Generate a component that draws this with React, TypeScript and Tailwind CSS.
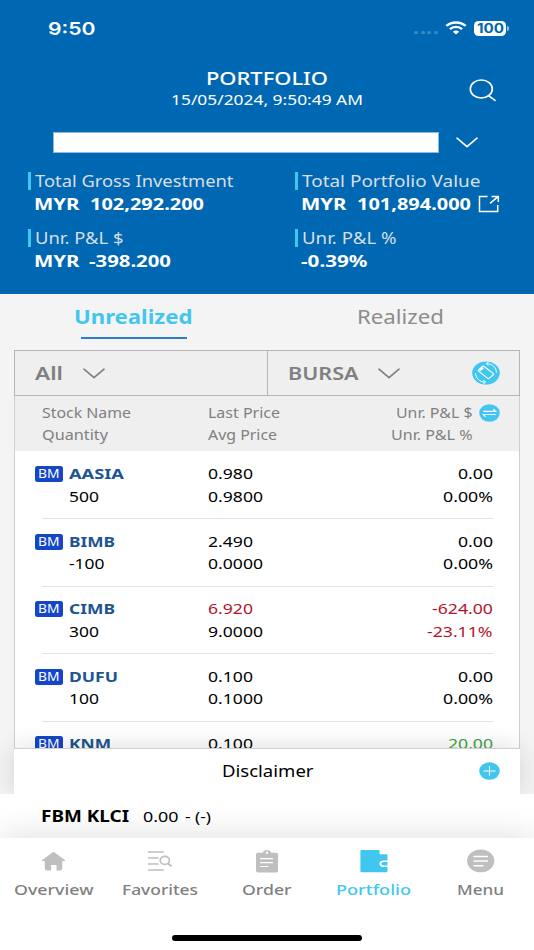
import { useLayoutEffect, useRef, useState, type ReactNode } from "react";
import clsx from "clsx";

type Holding = {
  name: string;
  nameW: number;
  qty?: string;
  qtyW?: number;
  last: string;
  avg?: string;
  pl: string;
  plW: number;
  pct?: string;
  pctW?: number;
  lastTone?: string;
  plTone?: string;
};

const holdings: Holding[] = [
  { name: "AASIA", nameW: 55, qty: "500", qtyW: 30, last: "0.980", avg: "0.9800", pl: "0.00", plW: 35, pct: "0.00%", pctW: 50 },
  { name: "BIMB", nameW: 46, qty: "-100", qtyW: 35.5, last: "2.490", avg: "0.0000", pl: "0.00", plW: 35, pct: "0.00%", pctW: 50 },
  {
    name: "CIMB",
    nameW: 46,
    qty: "300",
    qtyW: 30,
    last: "6.920",
    avg: "9.0000",
    pl: "-624.00",
    plW: 61,
    pct: "-23.11%",
    pctW: 65.5,
    lastTone: "text-[#b3142b]",
    plTone: "text-[#b3142b]",
  },
  { name: "DUFU", nameW: 49, qty: "100", qtyW: 30, last: "0.100", avg: "0.1000", pl: "0.00", plW: 35, pct: "0.00%", pctW: 50 },
  { name: "KNM", nameW: 42, last: "0.100", pl: "20.00", plW: 45, plTone: "text-[#43a047]" },
];

/** One line of text, stretched horizontally to the given width. */
function Wide({ w, className, children }: { w: number; className?: string; children: string }) {
  const ref = useRef<HTMLSpanElement>(null);
  const [scale, setScale] = useState(1);

  useLayoutEffect(() => {
    if (!ref.current) return;
    const natural = parseFloat(getComputedStyle(ref.current).width);
    if (natural > 0) setScale(w / natural);
  }, [w, children]);

  return (
    <span className={clsx("block shrink-0", className)} style={{ width: w }}>
      <span ref={ref} className="inline-block origin-left align-top whitespace-pre" style={{ transform: `scaleX(${scale})` }}>
        {children}
      </span>
    </span>
  );
}

function Chevron({ className }: { className?: string }) {
  return (
    <svg viewBox="0 0 22 11" fill="none" stroke="currentColor" strokeWidth="1.7" className={clsx("h-[11px] w-[22px] shrink-0", className)}>
      <path strokeLinecap="round" strokeLinejoin="round" d="M1 1.2L11 9.6L21 1.2" />
    </svg>
  );
}

function StatusBar() {
  return (
    <div className="flex h-[57px] items-center pl-[48px]">
      <Wide w={47.5} className="font-['Inter'] text-[17.5px] leading-[57px] font-semibold">9:50</Wide>
      <div className="mt-[8px] ml-[318.5px] flex gap-[2.7px]">
        {[0, 1, 2, 3].map((i) => (
          <span key={i} className="h-[3px] w-[4px] rounded-full bg-[#3a89c5]" />
        ))}
      </div>
      <svg viewBox="0 0 22 14" className="mt-[-1px] ml-[7px] h-[14px] w-[22px]" fill="none" stroke="currentColor">
        <path d="M1.3 4.9C6.6 0.2 15.4 0.2 20.7 4.9" strokeWidth="2.5" />
        <path d="M4.9 8.1C8.3 5.1 13.7 5.1 17.1 8.1" strokeWidth="2.4" />
        <path d="M11 13.6L7.8 10.7C9.6 9.2 12.4 9.2 14.2 10.7Z" fill="currentColor" stroke="none" />
      </svg>
      <div className="ml-[7px] flex h-[15px] w-[32px] justify-center rounded-[4.5px] bg-white text-[#0067b3]">
        <Wide w={27} className="font-['Inter'] text-[12.5px] leading-[15px] font-bold">100</Wide>
      </div>
      <span className="ml-[1px] h-[5px] w-[2px] rounded-r-full bg-[#9cc5e3]" />
    </div>
  );
}

function Stat({ label, w, children }: { label: string; w: number; children: ReactNode }) {
  return (
    <div className="h-[56.3px]">
      <div className="flex h-[18px] items-center">
        <span className="h-[18px] w-[3px] bg-[#41c7ef]" />
        <Wide w={w} className="ml-[4px] text-[16px] leading-[20px] text-[#d8dfe6]">{label}</Wide>
      </div>
      <div className="mt-[3px] ml-[6px] flex h-[22px] items-center text-[16.5px] leading-[22px] font-bold">{children}</div>
    </div>
  );
}

function Header() {
  return (
    <header className="h-[294px] bg-[#0067b3] text-white">
      <StatusBar />
      <div className="grid h-[53px] grid-cols-[1fr_auto_1fr] pt-[10px]">
        <div />
        <div className="flex flex-col items-center">
          <Wide w={122} className="text-[18px] leading-[22px] font-medium">PORTFOLIO</Wide>
          <Wide w={192} className="text-[15px] leading-[21px]">15/05/2024, 9:50:49 AM</Wide>
        </div>
        <svg
          viewBox="0 0 28 23"
          fill="none"
          stroke="currentColor"
          strokeWidth="1.7"
          className="mt-[12px] mr-[37px] h-[23px] w-[28px] justify-self-end"
        >
          <ellipse cx="12.3" cy="10" rx="11" ry="9" />
          <path strokeLinecap="round" d="M19.5 16.6L26 21.4" />
        </svg>
      </div>
      <div className="mt-[22px] ml-[53px] flex h-[21px] items-center">
        <div className="h-[21px] w-[386px] border border-[#8fb8e0] bg-white" />
        <Chevron className="mt-[-1px] ml-[16.5px]" />
      </div>
      <div className="mt-[19.3px] grid grid-cols-[267px_1fr] pl-[27.6px]">
        <Stat label="Total Gross Investment" w={198.5}>
          <Wide w={45.5}>MYR</Wide>
          <Wide w={114} className="ml-[10.5px]">102,292.200</Wide>
        </Stat>
        <Stat label="Total Portfolio Value" w={178.5}>
          <Wide w={45.5}>MYR</Wide>
          <Wide w={114} className="ml-[10.5px]">101,894.000</Wide>
          <svg viewBox="0 0 22 18" fill="none" stroke="currentColor" strokeWidth="1.5" className="ml-[7px] h-[18px] w-[22px]">
            <path d="M9.5 1.4H1.5V16.6H19.7V10" />
            <path d="M13.5 1.4H20.3V7M20 1.6L12 8.4" />
          </svg>
        </Stat>
        <Stat label="Unr. P&L $" w={88.5}>
          <Wide w={45.5}>MYR</Wide>
          <Wide w={82} className="ml-[9.5px]">-398.200</Wide>
        </Stat>
        <Stat label="Unr. P&L %" w={94.5}>
          <Wide w={66.5}>-0.39%</Wide>
        </Stat>
      </div>
    </header>
  );
}

function Filters() {
  return (
    <div className="grid h-[46px] grid-cols-[253px_1fr] border border-[#b5b5b5] bg-[#efefef] text-[17.5px] leading-[45px] font-semibold text-[#808080]">
      <div className="flex items-center border-r border-[#b5b5b5] pl-[20px]">
        <Wide w={28}>All</Wide>
        <Chevron className="ml-[19.5px]" />
      </div>
      <div className="flex items-center pl-[19.5px]">
        <Wide w={70.5}>BURSA</Wide>
        <Chevron className="ml-[19.5px]" />
        <svg viewBox="0 0 28 24" className="mt-[-2px] ml-[72px] h-[24px] w-[28px]" fill="none" stroke="#fff">
          <ellipse cx="14" cy="12" rx="13.8" ry="11.5" fill="#41c7ef" stroke="none" />
          <path d="M11.8 5.2L21.3 12.6Q22 13.2 21.2 13.8L17.2 17.4Q16.4 18 15.7 17.4L6.6 10.2Q6 9.6 6.7 9L10.6 5.2Q11.2 4.8 11.8 5.2Z" strokeWidth="1.1" />
          <path d="M8 9.6L11.2 6.8" strokeWidth="1.8" />
          <path d="M15 2.6C20.5 3 24.4 6.8 24.4 11.6M13 21.3C7.6 20.9 3.6 17 3.6 12.2" strokeWidth="1" />
          <path d="M16.5 1L14.3 2.7L16.2 4.6M11.6 19.2L13.6 21.2L11.4 22.8" strokeWidth="1" />
        </svg>
      </div>
    </div>
  );
}

function TableHead() {
  return (
    <div className="grid h-[55px] grid-cols-[166.3px_1fr_auto] border-x border-[#cfcfcf] bg-[#efefef] pt-[1.5px] pr-[19.5px] pl-[26.5px] text-[14px] leading-[22.5px] text-[#808080]">
      <div className="pt-[4px]">
        <Wide w={89}>Stock Name</Wide>
        <Wide w={66}>Quantity</Wide>
      </div>
      <div className="pt-[4px]">
        <Wide w={72}>Last Price</Wide>
        <Wide w={69}>Avg Price</Wide>
      </div>
      <div className="flex gap-[6.5px] pt-[4px]">
        <div className="flex flex-col items-end">
          <Wide w={76.5}>Unr. P&L $</Wide>
          <Wide w={81.5}>Unr. P&L %</Wide>
        </div>
        <svg viewBox="0 0 21 18" className="mt-[2px] h-[18px] w-[21px]" fill="none" stroke="#fff" strokeWidth="1.2">
          <ellipse cx="10.5" cy="9" rx="10.3" ry="8.7" fill="#41c7ef" stroke="none" />
          <path d="M4.2 7.4H16.6L14.4 5.2M16.8 10.5H4.4L6.6 12.7" />
        </svg>
      </div>
    </div>
  );
}

function Row({ h }: { h: Holding }) {
  return (
    <div className="h-[67.5px] shrink-0 pr-[26.5px] pl-[20px]">
      <div className="flex h-[67px] text-[14.8px] leading-[22.5px] text-black">
        <div className="w-[172.5px] pt-[11.2px]">
          <div className="flex items-center">
            <span className="mt-[1.4px] flex h-[16px] w-[27.5px] justify-center rounded-[2.5px] bg-[#1446c8] text-white">
              <Wide w={21.5} className="text-[12.5px] leading-[16.5px]">BM</Wide>
            </span>
            <Wide w={h.nameW} className="ml-[6.5px] font-bold text-[#1d5590]">{h.name}</Wide>
          </div>
          {h.qty && <Wide w={h.qtyW ?? 30} className="ml-[33.5px]">{h.qty}</Wide>}
        </div>
        <div className="flex-1 pt-[11.2px]">
          <Wide w={45} className={h.lastTone}>{h.last}</Wide>
          {h.avg && <Wide w={55}>{h.avg}</Wide>}
        </div>
        <div className={clsx("flex flex-col items-end pt-[11.2px]", h.plTone)}>
          <Wide w={h.plW}>{h.pl}</Wide>
          {h.pct && <Wide w={h.pctW ?? 50}>{h.pct}</Wide>}
        </div>
      </div>
      <div className="ml-[6.5px] h-px bg-[#e2e2e2]" />
    </div>
  );
}

const tabs = [
  {
    label: "Overview",
    w: 79.5,
    icon: (
      <svg viewBox="0 0 28 24" className="h-[24px] w-[28px]" fill="#bfbfbf">
        <path d="M13.7 3.2Q14.5 2.7 15.3 3.2L25.8 11Q26.8 11.9 25.5 12H23.2V19.5Q23.2 21.5 20.8 21.5H17.5V16H12.2V21.5H8.2Q5.8 21.5 5.8 19.5V12H3.5Q2.2 11.9 3.2 11Z" />
      </svg>
    ),
  },
  {
    label: "Favorites",
    w: 76,
    icon: (
      <svg viewBox="0 0 28 24" className="h-[24px] w-[28px]" fill="none" stroke="#bfbfbf" strokeWidth="1.7">
        <path d="M2 3H17.8M2 9H12.5M2 15H12.5M2 21H17.8" />
        <ellipse cx="18.8" cy="11.4" rx="4.6" ry="4" />
        <path d="M22 14.4L25.4 17.2" strokeWidth="2" />
      </svg>
    ),
  },
  {
    label: "Order",
    w: 49.5,
    icon: (
      <svg viewBox="0 0 28 24" className="h-[24px] w-[28px]" fill="#bfbfbf">
        <path d="M5 3.7H9.8C10.8 0.2 17.2 0.2 18.2 3.7H23Q25 3.7 25 5.3V21.8Q25 23.4 23 23.4H5Q3 23.4 3 21.8V5.3Q3 3.7 5 3.7Z" />
        <path d="M7 9.7H20M7 13.6H20M7 17.5H15.5" stroke="#fff" strokeWidth="1.2" />
        <circle cx="14" cy="3.8" r="1.2" fill="#fff" />
      </svg>
    ),
  },
  {
    label: "Portfolio",
    w: 75,
    icon: (
      <svg viewBox="0 0 28 24" className="h-[24px] w-[28px]" fill="#41c7ef">
        <path d="M1.8 1H18.3Q19.6 1 19.6 2.2V5.2H26.3Q27.5 5.2 27.5 6.4V11.5H23.5C18 11.5 18 18 23.5 18H27.5V22Q27.5 23.3 26.3 23.3H1.8Q0.4 23.3 0.4 22V2.3Q0.4 1 1.8 1Z" />
        <path d="M27.5 13.1H23.8C20.6 13.1 20.6 16.5 23.8 16.5H27.5Z" />
      </svg>
    ),
  },
  {
    label: "Menu",
    w: 47,
    icon: (
      <svg viewBox="0 0 28 24" className="h-[24px] w-[28px]" fill="#bfbfbf">
        <ellipse cx="13.7" cy="11.9" rx="13.6" ry="11.4" />
        <path d="M7 7.4H20.4M7 12H20.4M7 16.7H15.9" stroke="#fff" strokeWidth="1.5" strokeLinecap="round" />
      </svg>
    ),
  },
];

export default function App() {
  return (
    <div className="flex h-[950px] w-[534px] flex-col overflow-hidden bg-white font-['Noto_Sans',sans-serif]">
      <Header />

      <main className="h-[500px] overflow-hidden bg-[#f4f4f4]">
        <div className="grid h-[56px] grid-cols-2 text-[19px] leading-[46px]">
          <div className="flex flex-col items-center">
            <Wide w={118.5} className="h-[43px] font-bold text-[#41c7ef]">Unrealized</Wide>
            <div className="h-[2px] w-[106px] bg-[#2e7ec7]" />
          </div>
          <div className="flex flex-col items-center">
            <Wide w={87} className="text-[#8c8c8c]">Realized</Wide>
          </div>
        </div>
        <div className="mx-[14px]">
          <Filters />
          <TableHead />
          <div className="flex h-[297px] flex-col overflow-hidden border-x border-[#cfcfcf] bg-white">
            {holdings.map((h) => (
              <Row key={h.name} h={h} />
            ))}
          </div>
          <div className="relative flex h-[46px] items-center justify-end border-t border-[#d0d0d0] bg-white pr-[20px] shadow-[0_0_26px_rgba(0,0,0,0.14)]">
            <Wide w={91.5} className="mr-[166px] text-[15.8px] leading-[45px] text-black">Disclaimer</Wide>
            <svg viewBox="0 0 21 18" className="mt-[-2px] h-[18px] w-[21px]" fill="none" stroke="#fff" strokeWidth="1.1">
              <ellipse cx="10.5" cy="9" rx="10.3" ry="8.7" fill="#41c7ef" stroke="none" />
              <path d="M4.5 9H16.5M10.5 4V14" />
            </svg>
          </div>
        </div>
      </main>

      <div className="flex h-[44px] items-center bg-white pl-[41px] text-[15.2px] leading-[42.5px] text-black">
        <Wide w={88} className="font-bold">FBM KLCI</Wide>
        <Wide w={35.5} className="ml-[13.5px]">0.00</Wide>
        <Wide w={26} className="ml-[6.5px]">- (-)</Wide>
      </div>

      <nav className="relative h-[112px] bg-white pt-[11px] shadow-[0_0_34px_rgba(0,0,0,0.14)]">
        <div className="grid grid-cols-5">
          {tabs.map((t) => (
            <div key={t.label} className="flex flex-col items-center">
              {t.icon}
              <Wide
                w={t.w}
                className={clsx("mt-[6px] text-[15px] leading-[21px] font-medium", t.label === "Portfolio" ? "text-[#41c7ef]" : "text-[#808080]")}
              >
                {t.label}
              </Wide>
            </div>
          ))}
        </div>
        <div className="mx-auto mt-[35px] h-[5.5px] w-[190px] rounded-full bg-black" />
      </nav>
    </div>
  );
}
